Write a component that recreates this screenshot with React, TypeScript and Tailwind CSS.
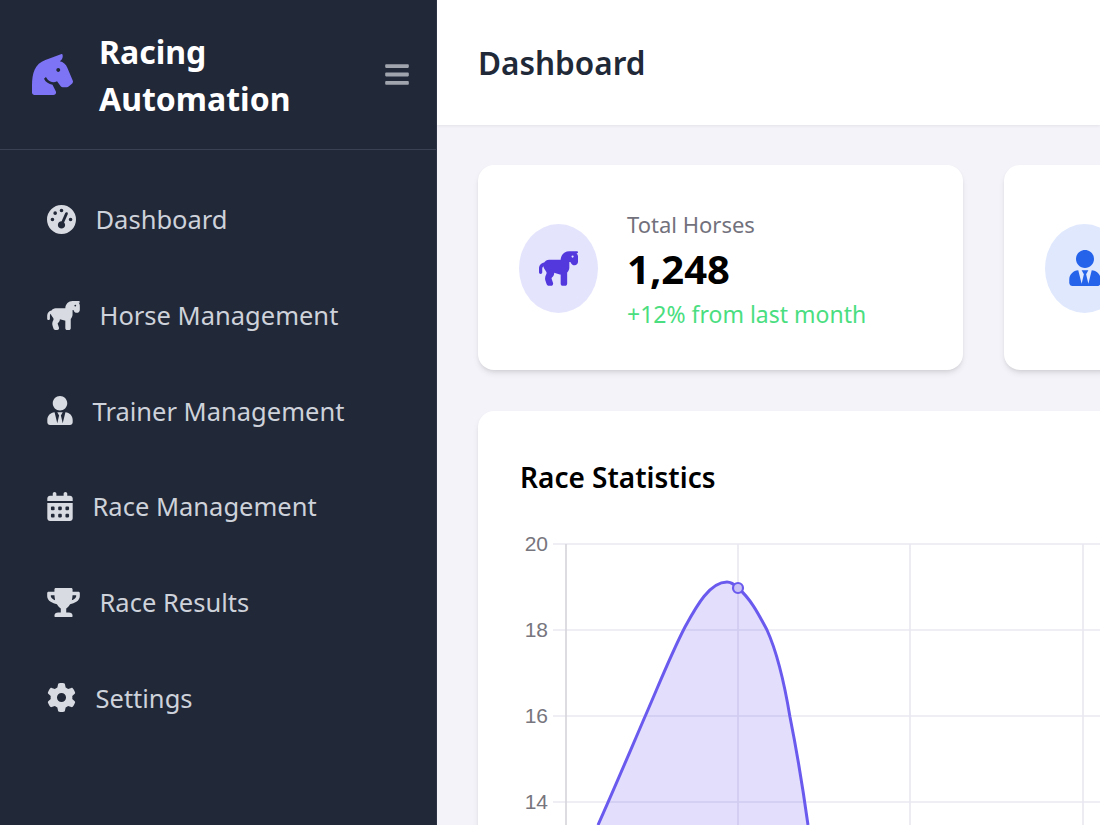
import React from "react";
import { FaHorseHead, FaUserTie, FaTrophy, FaBars } from "react-icons/fa";
import { FaHorse, FaGaugeHigh, FaCalendarDays, FaGear } from "react-icons/fa6";

const nav = [
  { label: "Dashboard", Icon: FaGaugeHigh, w: "w-[29px]" },
  { label: "Horse Management", Icon: FaHorse, w: "w-[33px]" },
  { label: "Trainer Management", Icon: FaUserTie, w: "w-[26px]" },
  { label: "Race Management", Icon: FaCalendarDays, w: "w-[26px]" },
  { label: "Race Results", Icon: FaTrophy, w: "w-[33px]" },
  { label: "Settings", Icon: FaGear, w: "w-[29px]" },
];

const curve =
  "M71 298 C88 260 104 222 120 185 C133 155 145 125 158 100 C170 78 183 55 200 55 C204 55 208 58 211 61 C224 72 232 88 240 103 C250 125 258 160 263 190 C270 225 276 262 281 298";

function Chart() {
  const ys = [17, 103, 189, 275];
  const xs = [39, 211, 383, 556];
  return (
    <svg width="628" height="310" viewBox="-6 0 628 310" className="block">
      {ys.map((y) => (
        <line key={y} x1="26" x2="622" y1={y} y2={y} stroke="#e9e8f0" strokeWidth="1.6" />
      ))}
      {xs.map((x, i) => (
        <line key={x} x1={x} x2={x} y1="17" y2="310" stroke={i === 0 ? "#d4d4da" : "#e9e8f0"} strokeWidth="1.6" />
      ))}
      <path d={`${curve} Z`} fill="#6c5cf0" fillOpacity="0.2" stroke="none" />
      <path d={curve} fill="none" stroke="#6a5aee" strokeWidth="3" />
      <circle cx="211" cy="61" r="5" fill="#c9c3f5" stroke="#6a5aee" strokeWidth="2.2" />
      {[["20", 17], ["18", 103], ["16", 189], ["14", 275]].map(([t, y]) => (
        <text key={t as string} x="21" y={(y as number) + 7} textAnchor="end" fontSize="21" fill="#77757d" fontFamily="'Liberation Sans', sans-serif">{t}</text>
      ))}
    </svg>
  );
}

export default function App() {
  return (
    <div className="flex h-[825px] w-[1100px] overflow-hidden bg-[#f3f3f9] font-['Noto_Sans',sans-serif]">
      <aside className="flex w-[437px] shrink-0 flex-col bg-[#212838] border-r border-[#2c3344]">
        <div className="flex h-[150px] items-center border-b border-[#3a4152] pl-8 pr-[27px]">
          <FaHorseHead className="h-[41px] w-[41px] shrink-0 text-[#7d73f5]" />
          <div className="ml-[26px] flex-1 text-[32px] font-bold leading-[47px] text-white">
            Racing<br />Automation
          </div>
          <FaBars className="h-[27px] w-[24px] text-[#a0a4ad]" />
        </div>
        <nav className="flex flex-col pt-[21.5px]">
          {nav.map(({ label, Icon, w }) => (
            <div key={label} className="flex h-[95.7px] items-center gap-[19.5px] pl-[47px] text-[25.5px] text-[#ced2da]">
              <Icon className={`h-[29px] ${w} shrink-0 text-[#d8dbe1]`} />
              <span>{label}</span>
            </div>
          ))}
        </nav>
      </aside>
      <main className="min-w-0 flex-1 overflow-hidden">
        <header className="flex h-[125px] items-center bg-white pl-[41px] shadow-[0_1px_3px_rgba(0,0,0,0.07)]">
          <h1 className="text-[31.5px] font-semibold text-[#1f2937]">Dashboard</h1>
        </header>
        <div className="flex flex-col gap-[41px] pl-[41px] pt-10">
          <div className="flex gap-[41px]">
            <div className="flex h-[205px] w-[485px] shrink-0 items-center gap-[29px] rounded-2xl bg-white pl-[41px] shadow-md">
              <div className="mt-px flex h-[89px] w-[79px] items-center justify-center rounded-[50%] bg-[#e4e4fd]">
                <FaHorse className="h-[35px] w-[39px] text-[#5338dd]" />
              </div>
              <div className="mt-[3px] flex flex-col">
                <span className="text-[22px] leading-[32px] text-[#72717c]">Total Horses</span>
                <span className="mt-1 text-[40px] font-bold leading-[49px] text-black">1,248</span>
                <span className="mt-[5px] text-[23px] leading-[32px] text-[#4ade80]">+12% from last month</span>
              </div>
            </div>
            <div className="flex h-[205px] w-[485px] shrink-0 items-center rounded-2xl bg-white pl-[41px] shadow-md">
              <div className="mt-px flex h-[89px] w-[79px] items-center justify-center rounded-[50%] bg-[#dfe8fd]">
                <FaUserTie className="h-[36px] w-[32px] text-[#2563eb]" />
              </div>
            </div>
          </div>
          <section className="h-[500px] w-[1000px] rounded-2xl bg-white pl-[42px] pt-[46px] shadow-md">
            <h2 className="text-[28px] font-semibold leading-[40px] text-black">Race Statistics</h2>
            <div className="ml-px mt-[30px]"><Chart /></div>
          </section>
        </div>
      </main>
    </div>
  );
}
